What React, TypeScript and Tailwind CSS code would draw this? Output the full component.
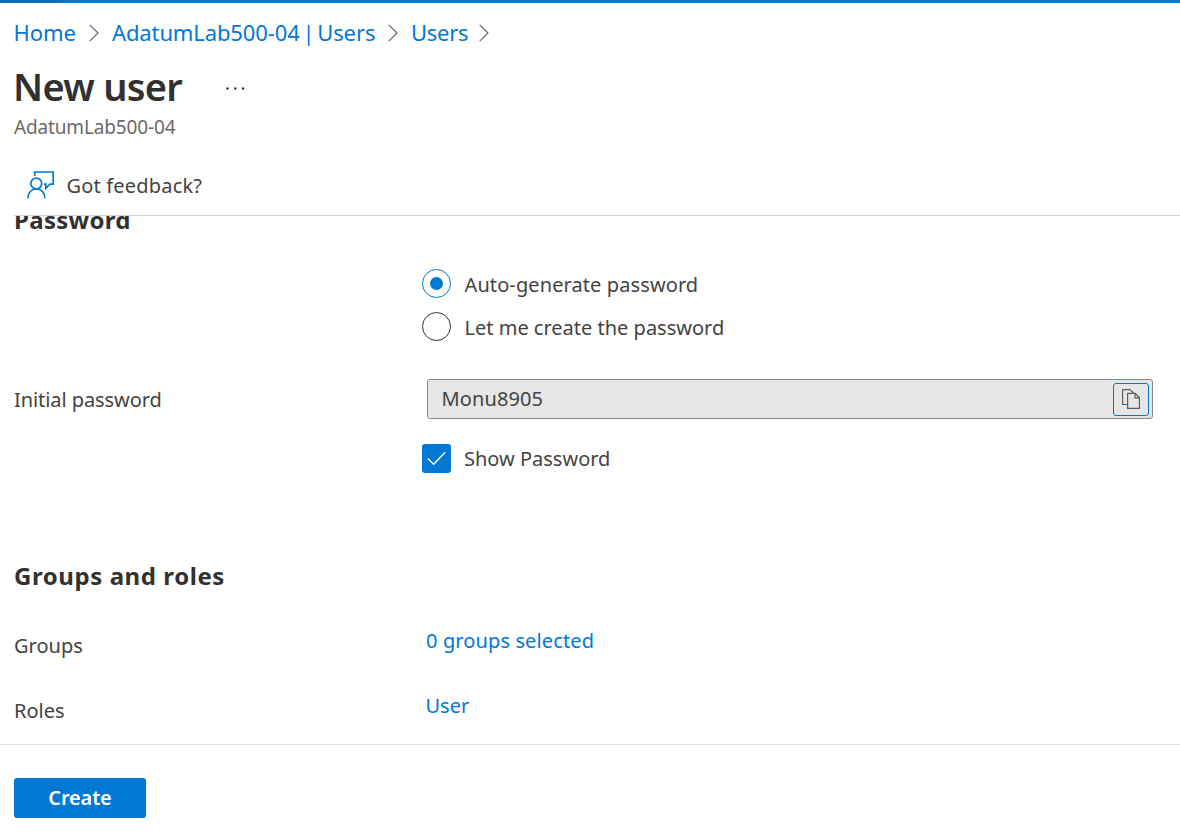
import { useState } from "react";

function Chevron() {
  return (
    <svg width="10" height="18" viewBox="0 0 10 18" fill="none" stroke="#605e5c" strokeWidth="1.1" className="shrink-0">
      <path d="M0.7 0.8L9 9L0.7 17.2" />
    </svg>
  );
}

function FeedbackIcon() {
  return (
    <svg width="28" height="28" viewBox="0 0 28 28" fill="none" stroke="#0078d4" strokeWidth="1.7" className="shrink-0">
      <path d="M7.7 5V1H26.2V13.2H23L18.8 17.3V13.2H17" />
      <circle cx="9.3" cy="12.5" r="5.4" />
      <path d="M0.9 27.2C0.9 21.5 4.5 18 9.3 18C14.1 18 17.8 21.5 17.8 27.2" />
    </svg>
  );
}

function CopyIcon() {
  return (
    <svg width="18" height="20" viewBox="0 0 18 20" fill="none" stroke="#605e5c" strokeWidth="1.2">
      <path d="M5.5 15.5H0.6V0.6H8L11.5 4M5.6 4.4H13.2L17.4 8.6V19.4H5.6ZM13 4.6V8.8H17.2" />
    </svg>
  );
}

function Radio({ label, checked, onSelect, tracking }: { label: string; checked: boolean; onSelect: () => void; tracking: string }) {
  return (
    <label className="flex h-[43px] items-center">
      <input type="radio" name="password-mode" checked={checked} onChange={onSelect} className="sr-only" />
      <span className={`flex size-[29px] items-center justify-center rounded-full border ${checked ? "border-[#0078d4]" : "border-[#323130]"}`}>
        {checked && <span className="size-[13px] rounded-full bg-[#0078d4]" />}
      </span>
      <span className={`ml-[13.5px] pt-[3px] ${tracking}`}>{label}</span>
    </label>
  );
}

export default function App() {
  const [auto, setAuto] = useState(true);
  return (
    <div className="flex h-[832px] w-[1180px] flex-col overflow-hidden bg-white font-['Noto_Sans','Open_Sans',sans-serif] text-[20px] text-[#444342]">
      <div className="h-[3px] shrink-0 bg-linear-to-r from-[#106ebe] from-5% to-[#0078d4] to-6%" />
      <nav className="flex h-[59px] shrink-0 items-center pl-[13.5px] text-[22px] whitespace-nowrap text-[#0078d4]">
        <a className="w-[75.5px] -tracking-[0.1px]">Home</a>
        <Chevron />
        <a className="ml-[13px] w-[276px] -tracking-[0.12px] [word-spacing:-2.8px]">AdatumLab500-04 | Users</a>
        <Chevron />
        <a className="ml-[13px] w-[68px] -tracking-[0.25px]">Users</a>
        <Chevron />
      </nav>
      <div className="flex h-12 shrink-0 items-center pl-[13px]">
        <h1 className="w-[213px] text-[38px] font-semibold -tracking-[0.7px] text-[#323130]">New user</h1>
        <svg width="19" height="3" viewBox="0 0 19 3" fill="#323130" className="mt-[5px]">
          <circle cx="1.5" cy="1.5" r="1.2" />
          <circle cx="9.3" cy="1.5" r="1.2" />
          <circle cx="17" cy="1.5" r="1.2" />
        </svg>
      </div>
      <div className="flex h-[34px] shrink-0 items-center pl-[14px] text-[19px] -tracking-[0.15px] text-[#6b6967]">AdatumLab500-04</div>
      <div className="ml-[14px] flex h-[72px] shrink-0 items-start border-b border-[#d2d0ce] pt-[27px] pl-[13px]">
        <FeedbackIcon />
        <span className="ml-[11.5px] leading-[30px] tracking-[0.18px]">Got feedback?</span>
      </div>
      <main className="h-[528px] shrink-0 overflow-hidden pl-[14px]">
        <h2 className="-mt-[12px] h-8 text-[24px] leading-8 font-bold tracking-[0.3px] text-[#323130]">Password</h2>
        <div className="mt-[26px] ml-[408px]">
          <Radio label="Auto-generate password" checked={auto} onSelect={() => setAuto(true)} tracking="tracking-[0.1px]" />
          <Radio label="Let me create the password" checked={!auto} onSelect={() => setAuto(false)} tracking="tracking-normal" />
        </div>
        <div className="mt-[31px] flex h-10 items-center">
          <span className="w-[413px] pt-[2px] -tracking-[0.07px]">Initial password</span>
          <div className="flex h-10 w-[726px] items-center justify-between rounded-[3px] border border-[#8a8886] bg-[#e6e6e6] pr-[3px] pl-[13.5px]">
            <span className="tracking-[0.12px]">Monu8905</span>
            <button className="flex h-[33px] w-9 items-center justify-center rounded-[3px] border border-[#0078d4]" aria-label="Copy">
              <CopyIcon />
            </button>
          </div>
        </div>
        <div className="mt-[25px] ml-[408px] flex h-[29px] items-center">
          <span className="flex size-[29px] items-center justify-center rounded-[3px] bg-[#0078d4]">
            <svg width="19" height="15" viewBox="0 0 19 15" fill="none" stroke="white" strokeWidth="1.4">
              <path d="M0.8 7.5L6.6 13.3L18.2 1.2" />
            </svg>
          </span>
          <span className="ml-[13px]">Show Password</span>
        </div>
        <h2 className="mt-[87px] h-8 text-[24px] leading-8 font-bold tracking-[0.57px] text-[#323130]">Groups and roles</h2>
        <div className="mt-[21px] flex h-[65px] items-center">
          <span className="w-[412px]">Groups</span>
          <a className="pb-[10px] tracking-[0.12px] text-[#0078d4]">0 groups selected</a>
        </div>
        <div className="flex h-[65px] items-center">
          <span className="w-[411.5px]">Roles</span>
          <a className="pb-[10px] text-[#0078d4]">User</a>
        </div>
      </main>
      <footer className="flex h-[88px] shrink-0 items-start border-t border-[#e1dfdd] pt-[33px] pl-[14px]">
        <button className="h-10 w-[132px] rounded-[3px] bg-[#0078d4] font-semibold -tracking-[0.15px] text-white">Create</button>
      </footer>
    </div>
  );
}
